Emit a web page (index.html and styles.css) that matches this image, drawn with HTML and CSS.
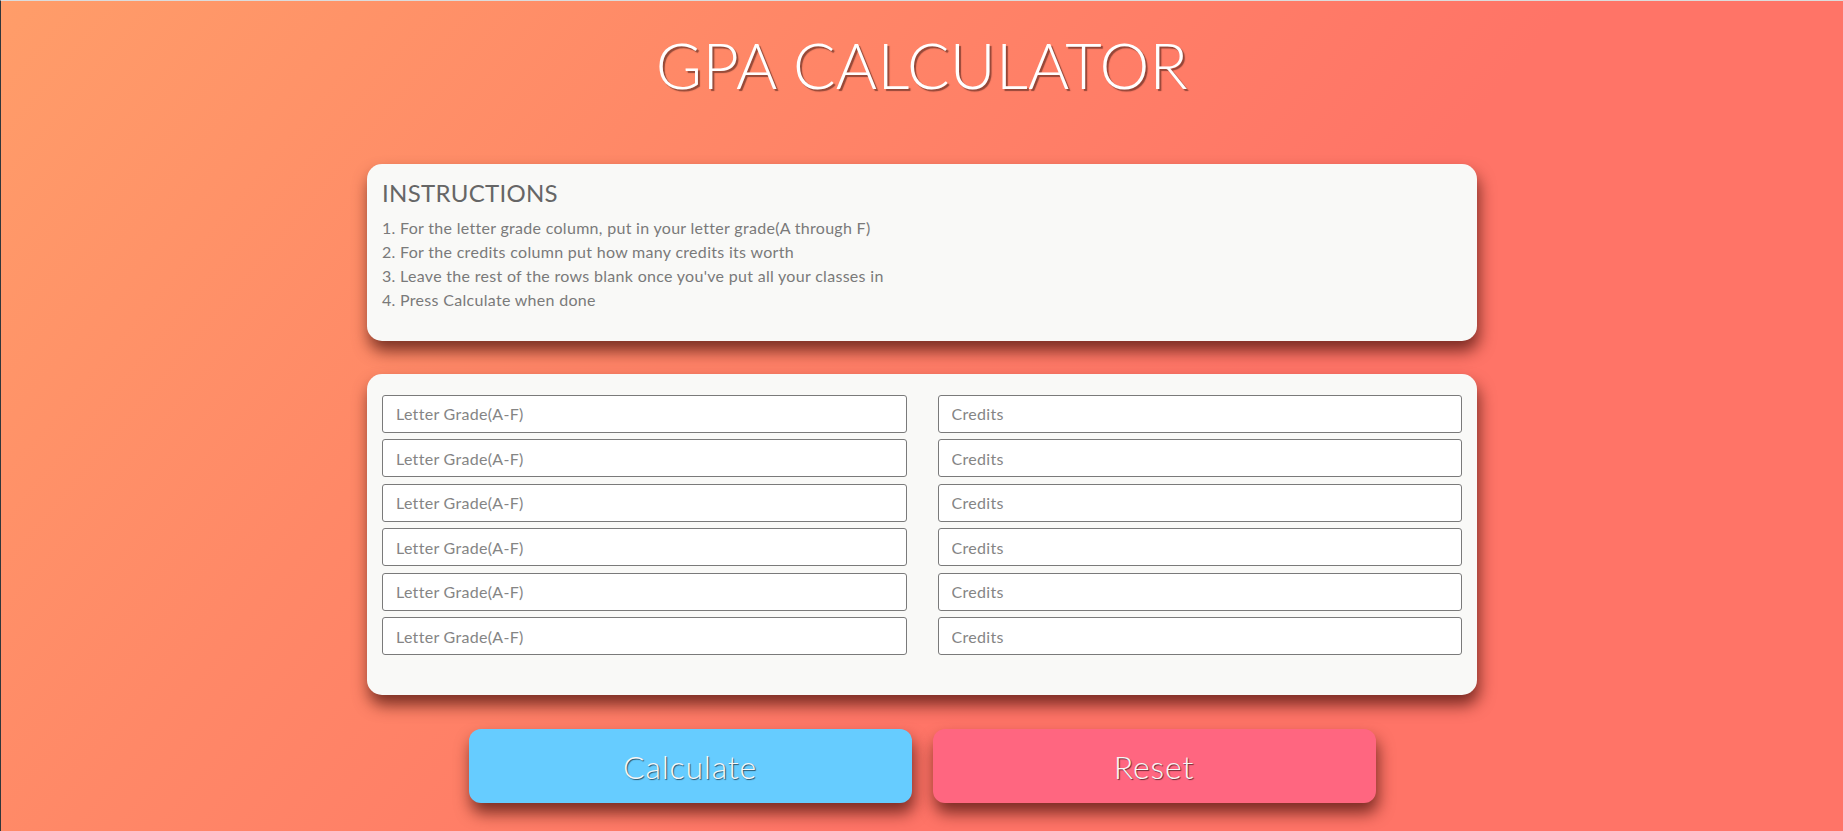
FILE: index.html
```html
<!DOCTYPE html>
<html lang="en">
<head>
<meta charset="utf-8">
<title>GPA Calculator</title>
<link rel="stylesheet" href="styles.css">
</head>
<body>
<main class="page">
  <h1 class="title">GPA CALCULATOR</h1>

  <section class="card instructions">
    <h2 class="instructions-title">INSTRUCTIONS</h2>
    <p class="step">1. For the letter grade column, put in your letter grade(A through F)</p>
    <p class="step">2. For the credits column put how many credits its worth</p>
    <p class="step">3. Leave the rest of the rows blank once you've put all your classes in</p>
    <p class="step">4. Press Calculate when done</p>
  </section>

  <section class="card grades">
    <input class="field" type="text" placeholder="Letter Grade(A-F)">
    <input class="field" type="text" placeholder="Credits">
    <input class="field" type="text" placeholder="Letter Grade(A-F)">
    <input class="field" type="text" placeholder="Credits">
    <input class="field" type="text" placeholder="Letter Grade(A-F)">
    <input class="field" type="text" placeholder="Credits">
    <input class="field" type="text" placeholder="Letter Grade(A-F)">
    <input class="field" type="text" placeholder="Credits">
    <input class="field" type="text" placeholder="Letter Grade(A-F)">
    <input class="field" type="text" placeholder="Credits">
    <input class="field" type="text" placeholder="Letter Grade(A-F)">
    <input class="field" type="text" placeholder="Credits">
  </section>

  <div class="actions">
    <button class="btn btn-calc" type="button">Calculate</button>
    <button class="btn btn-reset" type="button">Reset</button>
  </div>
</main>
</body>
</html>
```

FILE: styles.css
```css
* {
  box-sizing: border-box;
}

html {
  height: 100%;
}

body {
  margin: 0;
  min-height: 100%;
  font-family: Lato, "Open Sans", "Liberation Sans", sans-serif;
  background: linear-gradient(130deg, #ff9d69 0%, #ff8867 30%, #ff7467 62%, #ff7467 100%);
  border-top: 1px solid #dcdcdc;
  border-left: 1px solid #30363a;
}

.page {
  display: flex;
  flex-direction: column;
  align-items: center;
  padding-bottom: 40px;
}

.title {
  margin: 0;
  padding-top: 26px;
  font-size: 63px;
  font-weight: 300;
  line-height: 1.2;
  letter-spacing: 0.3px;
  color: #ffffff;
  text-shadow: 2px 2px 1px rgba(90, 40, 30, 0.65);
}

.card {
  width: 1110px;
  background: #f9f9f7;
  border-radius: 15px;
  box-shadow: 2px 10px 16px rgba(70, 15, 10, 0.72);
}

.instructions {
  margin-top: 61px;
  padding: 15.5px 15px 29px;
  color: #7a7a7a;
}

.instructions-title {
  margin: 0 0 8px;
  font-size: 24px;
  font-weight: 400;
  line-height: 1.2;
  letter-spacing: 0.3px;
  color: #666;
}

.step {
  margin: 0;
  font-size: 16px;
  font-weight: 400;
  line-height: 24px;
  letter-spacing: 0.3px;
}

.grades {
  margin-top: 33px;
  padding: 21px 15px 40px;
  display: grid;
  grid-template-columns: 1fr 1fr;
  column-gap: 31px;
  row-gap: 6.5px;
}

.field {
  height: 38px;
  border: 1px solid #7a7a7a;
  border-radius: 3px;
  background: #fff;
  padding: 0 13px;
  font-family: inherit;
  font-size: 16px;
  font-weight: 400;
  letter-spacing: 0.3px;
  color: #555;
}

.field::placeholder {
  color: #858585;
}

.actions {
  margin-top: 34px;
  display: flex;
  gap: 21px;
}

.btn {
  width: 443px;
  height: 74px;
  border: none;
  border-radius: 12px;
  font-family: inherit;
  font-size: 32px;
  font-weight: 300;
  letter-spacing: 0.8px;
  color: #f7f7f7;
  text-shadow: 1px 1px 1px rgba(0, 0, 0, 0.6);
  box-shadow: 2px 10px 16px rgba(70, 15, 10, 0.72);
  cursor: pointer;
}

.btn-calc {
  background: #66ccff;
}

.btn-reset {
  background: #ff6680;
}
```
